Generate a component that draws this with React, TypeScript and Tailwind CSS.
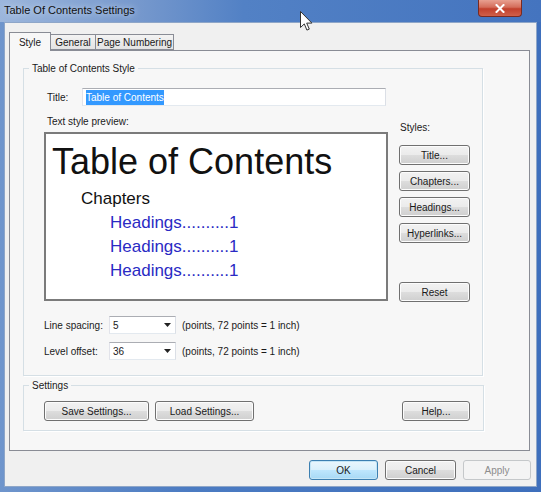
import type { ReactNode } from "react";

type BtnProps = {
  children: ReactNode;
  className?: string;
  variant?: "normal" | "default" | "disabled";
};

function Btn({ children, className = "", variant = "normal" }: BtnProps) {
  const look =
    variant === "default"
      ? "border-[#3c7fb1] bg-[linear-gradient(#eaf6fd_0%,#d9f0fc_50%,#bee6fd_51%,#a7d9f5_100%)] shadow-[inset_0_0_0_1px_#c4e5f6]"
      : variant === "disabled"
        ? "border-[#c5c8ca] bg-[#f4f4f4] text-[#8d8d8d]"
        : "border-[#707070] bg-[linear-gradient(#f2f2f2_0%,#ebebeb_50%,#dddddd_51%,#cfcfcf_100%)] shadow-[inset_0_0_0_1px_#fcfcfc]";
  return (
    <div
      className={`flex h-[20px] items-center justify-center whitespace-nowrap rounded-[3px] border ${look} ${className}`}
    >
      {children}
    </div>
  );
}

function Combo({ value }: { value: string }) {
  return (
    <div className="flex h-[18px] w-[67px] items-center border border-[#abadb3] border-l-[#e2e3ea] border-b-[#e3e9ef] border-r-[#dbdfe6] bg-white pl-[3px]">
      <span className="flex-1">{value}</span>
      <svg width="7" height="4" viewBox="0 0 7 4" className="mr-[4px]">
        <path d="M0 0h7L3.5 4z" fill="#222" />
      </svg>
    </div>
  );
}

function Cursor() {
  return (
    <svg
      width="13"
      height="21"
      viewBox="0 0 13 21"
      className="absolute left-[300px] top-[11px]"
    >
      <path
        d="M0.5 0.5v16l3.8-3.6 2.6 6.2 2.4-1-2.6-6h5.2z"
        fill="#fff"
        stroke="#333"
        strokeWidth="1"
        strokeLinejoin="round"
      />
    </svg>
  );
}

export default function App() {
  const headings = [1, 2, 3];
  return (
    <div className="relative flex h-[492px] w-[541px] flex-col overflow-hidden whitespace-nowrap bg-[linear-gradient(90deg,#6f95cc_0%,#4b7bc2_35%,#3e6fbc_100%)] font-['Liberation_Sans',Arial,sans-serif] text-[10px] leading-[15px] text-[#1a1a1a]">
      {/* title bar */}
      <div className="flex h-[22px] shrink-0 items-start bg-[linear-gradient(90deg,#9cb6dc_0%,#7799cd_25%,#5281c5_45%,#4474bf_100%)]">
        <span className="ml-[4px] mt-[3px] text-[11px] leading-[15px] text-[#111] [text-shadow:0_0_6px_#dbe7f6]">
          Table Of Contents Settings
        </span>
        <div className="ml-auto mr-[19px] flex h-[17px] w-[44px] items-center justify-center rounded-b-[4px] border border-t-0 border-[#7a2a20] bg-[linear-gradient(#e8a090_0%,#d46d5a_45%,#c2402c_55%,#d0604a_100%)]">
          <svg width="10" height="9" viewBox="0 0 10 9">
            <path d="M1.5 1l7 7M8.5 1l-7 7" stroke="#fff" strokeWidth="2" strokeLinecap="square" />
          </svg>
        </div>
      </div>

      {/* client area */}
      <div className="mx-[4px] mb-[5px] flex flex-1 flex-col border border-[#8ea6c8] bg-[#f0f0f0]">
        {/* tabs */}
        <div className="ml-[4px] mt-[9px] flex h-[18px] items-end">
          <div className="relative z-10 -mb-px flex h-[19px] w-[42px] items-start justify-center border border-b-0 border-[#898c95] bg-[#f7f7f7] pt-[2px]">
            Style
          </div>
          <div className="flex h-[16px] w-[45px] items-center justify-center border border-l-0 border-[#898c95] bg-[linear-gradient(#f3f3f3,#e3e3e3)]">
            General
          </div>
          <div className="flex h-[16px] w-[78px] items-center justify-center border border-l-0 border-[#898c95] bg-[linear-gradient(#f3f3f3,#e3e3e3)]">
            Page Numbering
          </div>
        </div>

        {/* tab panel */}
        <div className="ml-[4px] flex h-[401px] w-[521px] flex-col border border-[#898c95] bg-[#f7f7f7]">
          <fieldset className="ml-[13px] mt-[10px] h-[315px] w-[460px] border border-[#d5dfe5] shadow-[1px_1px_0_#ffffff]">
            <legend className="ml-[5px] px-[3px]">Table of Contents Style</legend>
            <div className="flex">
              <div className="ml-[20px] w-[345px]">
                <div className="ml-[3px] mt-[12px] flex h-[18px] items-center">
                  <span className="w-[35px]">Title:</span>
                  <div className="flex h-[18px] w-[304px] items-center border border-[#abadb3] border-l-[#e2e3ea] border-b-[#e3e9ef] border-r-[#dbdfe6] bg-white pl-[3px]">
                    <span className="bg-[#3399ff] text-white">Table of Contents</span>
                  </div>
                </div>
                <div className="ml-[3px] mt-[8px]">Text style preview:</div>
                <div className="mt-[3px] h-[169px] w-[344px] border-2 border-[#7b7b7b] bg-white">
                  <div className="ml-[6px] mt-[9px] text-[36px] leading-[38px] text-[#111]">
                    Table of Contents
                  </div>
                  <div className="ml-[35px] mt-[7px] text-[17px] leading-[22px] text-[#111]">
                    Chapters
                  </div>
                  {headings.map((h) => (
                    <div
                      key={h}
                      className="ml-[64px] mt-[2px] text-[17px] leading-[22px] text-[#2a2ac4]"
                    >
                      Headings..........1
                    </div>
                  ))}
                </div>
                <div className="mt-[15px] flex h-[18px] items-center">
                  <span className="w-[65px]">Line spacing:</span>
                  <Combo value="5" />
                  <span className="ml-[6px]">(points, 72 points = 1 inch)</span>
                </div>
                <div className="mt-[8px] flex h-[18px] items-center">
                  <span className="w-[65px]">Level offset:</span>
                  <Combo value="36" />
                  <span className="ml-[6px]">(points, 72 points = 1 inch)</span>
                </div>
              </div>
              <div className="ml-[10px] flex w-[71px] flex-col">
                <div className="ml-[1px] mt-[44px]">Styles:</div>
                <div className="mt-[10px] flex flex-col gap-[6px]">
                  <Btn>Title...</Btn>
                  <Btn>Chapters...</Btn>
                  <Btn>Headings...</Btn>
                  <Btn>Hyperlinks...</Btn>
                </div>
                <Btn className="mt-[39px]">Reset</Btn>
              </div>
            </div>
          </fieldset>

          <fieldset className="ml-[13px] mt-[2px] h-[53px] w-[461px] border border-[#d5dfe5] shadow-[1px_1px_0_#ffffff]">
            <legend className="ml-[5px] px-[3px]">Settings</legend>
            <div className="ml-[20px] mr-[13px] mt-[8px] flex">
              <Btn className="w-[105px]">Save Settings...</Btn>
              <Btn className="ml-[6px] w-[99px]">Load Settings...</Btn>
              <Btn className="ml-auto w-[68px]">Help...</Btn>
            </div>
          </fieldset>
        </div>

        {/* dialog buttons */}
        <div className="mr-[5px] mt-[9px] flex justify-end gap-[7px]">
          <Btn variant="default" className="w-[69px]">
            OK
          </Btn>
          <Btn className="w-[71px]">Cancel</Btn>
          <Btn variant="disabled" className="w-[68px]">
            Apply
          </Btn>
        </div>
      </div>

      <Cursor />
    </div>
  );
}
